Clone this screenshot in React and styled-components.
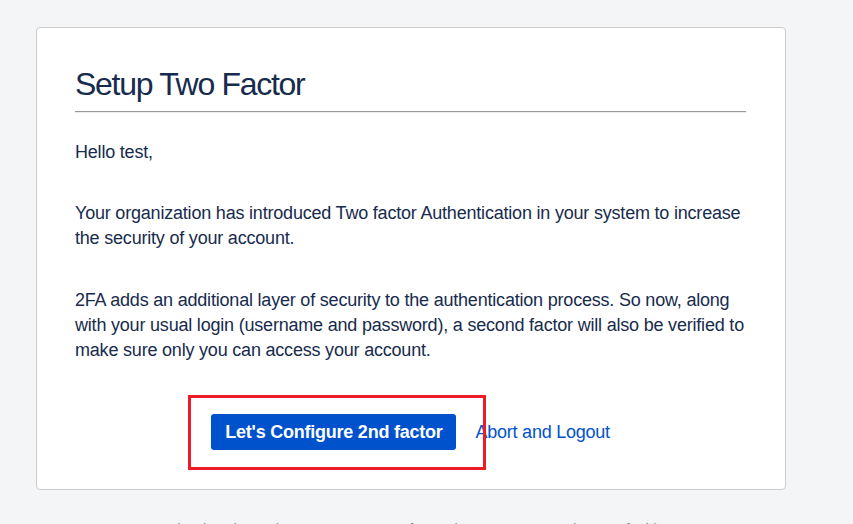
import React from "react";
import styled, { createGlobalStyle } from "styled-components";

const GlobalStyle = createGlobalStyle`
  html, body {
    margin: 0;
    padding: 0;
    background: #f4f5f7;
    font-family: "Liberation Sans", Arial, sans-serif;
    color: #172b4d;
  }
`;

const Page = styled.div`
  width: 853px;
  height: 524px;
  overflow: hidden;
  padding-top: 27px;
  box-sizing: border-box;
`;

const Card = styled.section`
  position: relative;
  width: 750px;
  margin-left: 36px;
  box-sizing: border-box;
  background: #ffffff;
  border: 1px solid #cccccc;
  border-radius: 4px;
  padding: 37px 39px 39px 38px;
`;

const Heading = styled.h1`
  margin: 0;
  font-size: 32px;
  letter-spacing: -1.3px;
  line-height: 38px;
  font-weight: 400;
  color: #172b4d;
  padding-bottom: 8px;
  border-bottom: 1px solid #999999;
  box-shadow: 0 1px 0 #ececec;
`;

const Body = styled.div`
  padding-top: 28px;
`;

const Paragraph = styled.p`
  margin: 0 0 ${(p) => p.$gap || 0}px;
  font-size: 18px;
  letter-spacing: -0.2px;
  line-height: 25px;
  color: #172b4d;
`;

const Actions = styled.div`
  display: flex;
  justify-content: center;
  align-items: center;
  gap: 20px;
  margin-top: 51px;
`;

const PrimaryButton = styled.button`
  height: 36px;
  padding: 0 13px 0 14px;
  border: none;
  border-radius: 3px;
  background: #0052cc;
  color: #ffffff;
  font-family: "Liberation Sans", Arial, sans-serif;
  font-size: 18px;
  letter-spacing: -0.23px;
  font-weight: 700;
  cursor: pointer;
`;

const TextLink = styled.a`
  font-size: 18px;
  letter-spacing: -0.25px;
  color: #0052cc;
  text-decoration: none;
`;

const Highlight = styled.div`
  position: absolute;
  left: 151px;
  top: 367px;
  width: 298px;
  height: 75px;
  box-sizing: border-box;
  border: 3px solid #ed1c24;
  pointer-events: none;
`;

const Footer = styled.footer`
  width: 750px;
  margin: 29px 0 0 36px;
  text-align: center;
  font-size: 15px;
  letter-spacing: -0.25px;
  line-height: 20px;
  color: #7a869a;
  white-space: nowrap;
`;

export default function App() {
  return (
    <Page>
      <GlobalStyle />
      <Card>
        <Heading>Setup Two Factor</Heading>
        <Body>
          <Paragraph $gap={36}>Hello test,</Paragraph>
          <Paragraph $gap={37}>
            Your organization has introduced Two factor Authentication in your
            system to increase the security of your account.
          </Paragraph>
          <Paragraph>
            2FA adds an additional layer of security to the authentication
            process. So now, along with your usual login (username and
            password), a second factor will also be verified to make sure only
            you can access your account.
          </Paragraph>
          <Actions>
            <PrimaryButton>Let's Configure 2nd factor</PrimaryButton>
            <TextLink href="#">Abort and Logout</TextLink>
          </Actions>
        </Body>
        <Highlight />
      </Card>
      <Footer>
        Atlassian Jira Project Management Software (v8.13.1#813001-sha1:6e6f6ab)
      </Footer>
    </Page>
  );
}
